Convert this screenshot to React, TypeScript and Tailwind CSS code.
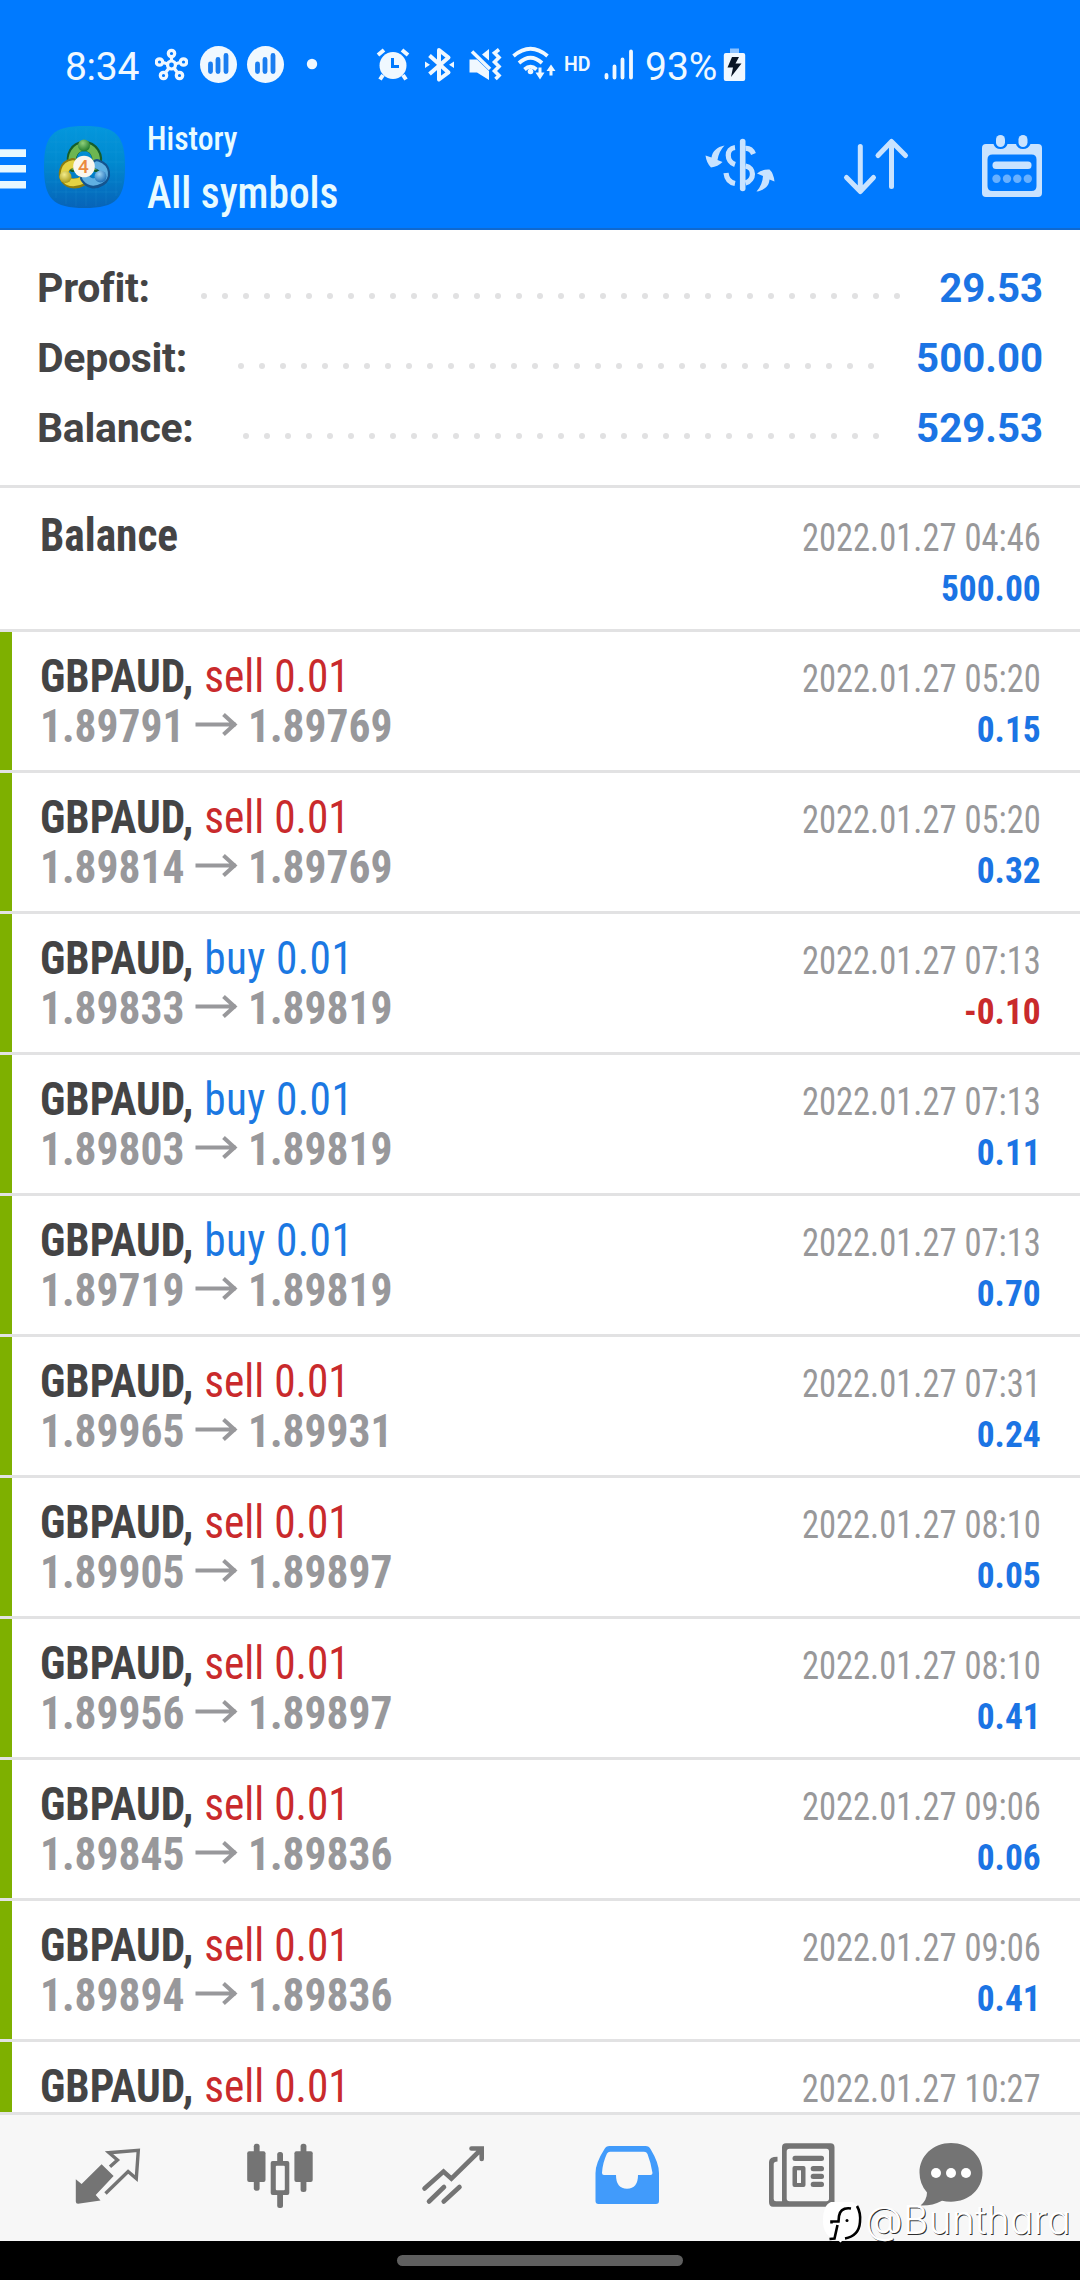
const trades = [
  { side: "sell", from: "1.89791", to: "1.89769", time: "2022.01.27 05:20", profit: "0.15" },
  { side: "sell", from: "1.89814", to: "1.89769", time: "2022.01.27 05:20", profit: "0.32" },
  { side: "buy", from: "1.89833", to: "1.89819", time: "2022.01.27 07:13", profit: "-0.10" },
  { side: "buy", from: "1.89803", to: "1.89819", time: "2022.01.27 07:13", profit: "0.11" },
  { side: "buy", from: "1.89719", to: "1.89819", time: "2022.01.27 07:13", profit: "0.70" },
  { side: "sell", from: "1.89965", to: "1.89931", time: "2022.01.27 07:31", profit: "0.24" },
  { side: "sell", from: "1.89905", to: "1.89897", time: "2022.01.27 08:10", profit: "0.05" },
  { side: "sell", from: "1.89956", to: "1.89897", time: "2022.01.27 08:10", profit: "0.41" },
  { side: "sell", from: "1.89845", to: "1.89836", time: "2022.01.27 09:06", profit: "0.06" },
  { side: "sell", from: "1.89894", to: "1.89836", time: "2022.01.27 09:06", profit: "0.41" },
];

const summary = [
  { label: "Profit:", value: "29.53", dots: 34, valueWidth: "w-[143px]" },
  { label: "Deposit:", value: "500.00", dots: 31, valueWidth: "w-[169px]" },
  { label: "Balance:", value: "529.53", dots: 31, valueWidth: "w-[164px]" },
];

function StatusBar() {
  return (
    <div className="flex h-[104px] items-start pl-[65px] text-[#f0f8ff]">
      <span className="mt-[42px] w-[90px] text-[39px] leading-[50px] tracking-[-0.3px]">8:34</span>
      <svg className="h-[104px] w-[33px]" viewBox="155 0 33 104" fill="none" stroke="currentColor" strokeWidth="3.2">
        <path d="M171.5 62V57M175 64L180 62.5M174 68L177 72M169 68L166 72M168 64L163 62.5" />
        <circle cx="171.5" cy="65" r="4" />
        <circle cx="171.5" cy="53.5" r="3.2" />
        <circle cx="183.5" cy="62" r="3.2" />
        <circle cx="179.5" cy="75.5" r="3.2" />
        <circle cx="163.5" cy="75.5" r="3.2" />
        <circle cx="159.5" cy="62" r="3.2" />
      </svg>
      <svg className="ml-[11px] h-[104px] w-[120px]" viewBox="199 0 120 104">
        <g fill="currentColor">
          <circle cx="218.5" cy="64.5" r="18.5" />
          <circle cx="265.5" cy="64.5" r="18.5" />
          <circle cx="312" cy="64" r="5.2" />
        </g>
        <path
          d="M210.5 64V71.5M218 59.5V71.5M226 55.5V71.5M257.5 64V71.5M265 59.5V71.5M273 55.5V71.5"
          stroke="#1a7df0"
          strokeWidth="4.8"
          strokeLinecap="round"
        />
      </svg>
      {/* alarm, bluetooth, mute, wifi */}
      <svg className="ml-[56px] h-[104px] w-[182px]" viewBox="375 0 182 104" fill="none" stroke="currentColor">
        <circle cx="393" cy="65.5" r="13.5" fill="currentColor" stroke="none" />
        <path d="M378 55L384 50M408 55L402 50M383 75L380 79.5M403 75L406 79.5" strokeWidth="4" />
        <path d="M392.5 58V66.5H399" stroke="#007aff" strokeWidth="3" />
        <path d="M429.5 55.5L448.5 72.5L439 79.5V50L448.5 57.5L429.5 74" strokeWidth="4" strokeLinejoin="round" />
        <path d="M425 61.5L430 64.8L425 68ZM454 61.5L449 64.8L454 68Z" fill="currentColor" stroke="none" />
        <path d="M469.5 59.5H477L489 71V80L477 72.5H469.5ZM482 54.5L489 49V60.5Z" fill="currentColor" stroke="none" />
        <path d="M472 51.5L490 69" strokeWidth="3.5" />
        <path d="M499 49.5L494.5 53L499 57.5L494.5 62L499 66.5L494.5 71L499 75.5L495.5 79" strokeWidth="3.6" />
        <path d="M513.5 56Q530.5 41.5 547.5 56M519 63Q530.5 52.5 542 63M524.5 69.5Q530.5 64 536.5 69.5" strokeWidth="3.8" />
        <circle cx="530.5" cy="71.5" r="2.8" fill="currentColor" stroke="none" />
        <path d="M540 67.5V76M551 75.5V67.5" strokeWidth="3" />
        <path d="M535.5 72.5H544.5L540 79.5ZM546.5 71H555.5L551 64.5Z" fill="currentColor" stroke="none" />
      </svg>
      <span className="ml-[7px] mt-[42px] w-[39px] text-[19.5px] font-semibold leading-[46px]">HD</span>
      <svg className="h-[104px] w-[32px]" viewBox="602 0 32 104" stroke="currentColor" strokeWidth="3.8" strokeLinecap="round">
        <path d="M605.5 75V77.5M613.5 66.5V77.5M621.5 59.5V77.5M630 51.5V77.5" />
      </svg>
      <span className="ml-[10px] mt-[42px] w-[78px] text-[39px] leading-[50px]">93%</span>
      <svg className="h-[104px] w-[24px]" viewBox="722 0 24 104">
        <rect x="729" y="48.5" width="9" height="6" fill="#8cc2ff" />
        <rect x="722.8" y="53" width="21.4" height="28" rx="2" fill="currentColor" />
        <path d="M731 57L726.5 67.5H732L730 77L740.5 63.5H734.5L738 57Z" fill="#0a1626" />
      </svg>
    </div>
  );
}

function AppLogo() {
  return (
    <svg className="ml-[18px] h-[124px] w-[82px]" viewBox="44 104 82 124">
      <defs>
        <linearGradient id="tile" x1="0" y1="0" x2="0" y2="1">
          <stop offset="0" stopColor="#0497dd" />
          <stop offset="0.45" stopColor="#0089cf" />
          <stop offset="1" stopColor="#0763b8" />
        </linearGradient>
        <radialGradient id="green" cx="0.4" cy="0.3" r="0.7">
          <stop offset="0" stopColor="#8fd07a" />
          <stop offset="1" stopColor="#1f7a2c" />
        </radialGradient>
        <radialGradient id="gold" cx="0.4" cy="0.3" r="0.7">
          <stop offset="0" stopColor="#f3ec8a" />
          <stop offset="1" stopColor="#a89a1c" />
        </radialGradient>
        <radialGradient id="sky" cx="0.4" cy="0.3" r="0.7">
          <stop offset="0" stopColor="#9ed4f5" />
          <stop offset="1" stopColor="#1e70b8" />
        </radialGradient>
      </defs>
      <path
        d="M84.5 126C116 126 125 135 125 167S116 208 84.5 208S44 199 44 167S53 126 84.5 126Z"
        fill="url(#tile)"
      />
      <path
        d="M56 135V198M66 130V204M76 128V206M86 128V206M96 128V206M106 130V204M116 138V196M50 142H120M46 152H123M45 162H124M45 172H124M46 182H122M52 192H118"
        stroke="#3db1ea"
        strokeOpacity="0.14"
        strokeWidth="1"
      />
      <g fill="none" strokeLinecap="round">
        <path d="M73 167C69 155 75 146 84 146S100 155 96 167" stroke="#155d2b" strokeWidth="10" />
        <path d="M73 166C70 155 76 147 84 147S99 155 95 166" stroke="#6db651" strokeWidth="7.5" />
        <path d="M73 163C63 165 62 175 66 180S78 184 83 181" stroke="#8a7c10" strokeWidth="10" />
        <path d="M73 164C64 165 63 175 66 179.5S77 183 83 180" stroke="#e3d344" strokeWidth="7.5" />
        <path d="M97 164C107 167 107 177 101 181S89 184 85 178" stroke="#14548f" strokeWidth="10" />
        <path d="M97 165C106 168 106 177 100 180S90 183 86 178" stroke="#5fb0e2" strokeWidth="7.5" />
      </g>
      <circle cx="84" cy="145.5" r="6" fill="url(#green)" />
      <circle cx="65.5" cy="177" r="6" fill="url(#gold)" />
      <circle cx="100.5" cy="176.5" r="6" fill="url(#sky)" />
      <circle cx="84" cy="166.5" r="10.8" fill="#faf6ee" />
      <text x="83.5" y="173.2" textAnchor="middle" fontSize="19" fontWeight="500" fill="#ea8a3e">
        4
      </text>
    </svg>
  );
}

function Header() {
  return (
    <header className="h-[230px] border-b-2 border-[#1069cf] bg-[#007aff]">
      <StatusBar />
      <div className="flex h-[124px] items-start">
        <svg className="h-[124px] w-[26px]" viewBox="0 104 26 124" fill="#e8f8ff">
          <path d="M0 149.3H26V157H0ZM0 165H26V172.5H0ZM0 181H26V188.5H0Z" />
        </svg>
        <AppLogo />
        <div className="ml-[21px] mt-[12px] w-[557px] origin-left scale-x-[0.93] font-['Roboto_Condensed',Roboto,sans-serif] font-medium text-[#e8fbff]">
          <div className="text-[34px] leading-[44px]">History</div>
          <div className="mt-[7px] text-[44.5px] leading-[52px]">All symbols</div>
        </div>
        <svg className="h-[124px] w-[76px]" viewBox="704 104 76 124" fill="none" stroke="#c9e3ff">
          <path d="M742.7 141.5V188.5" strokeWidth="5.6" strokeLinecap="round" />
          <path d="M735 147.5C726 148.5 726 161.5 735 164.5M745.5 148.5Q751 148 753.5 154" strokeWidth="5.2" />
          <path d="M745.5 166C754.5 167.5 755 180 745.5 183M726 173Q727 182 735 183.5" strokeWidth="5.2" />
          <g fill="#c9e3ff" stroke="none">
            <path d="M724.5 145.5C717 147 712.5 151 711.5 157.5L705.5 155.5Q706.5 163 711 167.5Q718 166.5 722.5 162L717.5 160Q719 151 724.5 145.5Z" />
            <path d="M756.5 191.5C765 190 769 186 769.5 179.5L774.5 181.5Q773.5 173 769.5 169.5Q762 169 757 173.5L763 176Q762.5 185 756.5 191.5Z" />
          </g>
        </svg>
        <svg
          className="ml-[62px] h-[124px] w-[70px]"
          viewBox="842 104 70 124"
          fill="none"
          stroke="#c9e3ff"
          strokeWidth="5"
          strokeLinecap="round"
          strokeLinejoin="round"
        >
          <path d="M860.3 146.5V191M846.5 177.5L860.3 191.5L873.5 177.5M891.5 186.5V142M878 155.5L891.5 141.5L905.5 155.5" />
        </svg>
        <svg className="ml-[68px] h-[124px] w-[64px]" viewBox="980 104 64 124">
          <path
            fillRule="evenodd"
            fill="#c9e3ff"
            d="M986 144H993.5Q995 149 1000.5 149T1007.5 144H1016Q1017.5 149 1023 149T1030.5 144H1038Q1042 144 1042 148V193Q1042 197 1038 197H986Q982 197 982 193V148Q982 144 986 144ZM992.5 154.5Q987.5 154.5 987.5 159.5V186Q987.5 191 992.5 191H1031.5Q1036.5 191 1036.5 186V159.5Q1036.5 154.5 1031.5 154.5Z"
          />
          <rect x="996" y="135" width="9" height="12" rx="4.5" fill="#c9e3ff" />
          <rect x="1018.5" y="135" width="9" height="12" rx="4.5" fill="#c9e3ff" />
          <rect x="992.5" y="161.5" width="39" height="7.5" rx="3.5" fill="#c9e3ff" />
          <g fill="#68b0ff">
            <circle cx="996.5" cy="178.7" r="4.2" />
            <circle cx="1007" cy="178.7" r="4.2" />
            <circle cx="1017.3" cy="178.7" r="4.2" />
            <circle cx="1027.8" cy="178.7" r="4.2" />
          </g>
        </svg>
      </div>
    </header>
  );
}

function Summary() {
  return (
    <section className="flex h-[258px] flex-col border-b-[3px] border-[#e2e2e3] px-[37px] pt-[23px]">
      {summary.map((row) => (
        <div key={row.label} className="flex h-[70px] items-center text-[41px] font-bold leading-[70px]">
          <span className="tracking-[-0.3px] text-[#444445]">{row.label}</span>
          <div className="mt-[16px] flex flex-1 justify-end gap-[15px]">
            {Array.from({ length: row.dots }, (_, i) => (
              <span key={i} className="h-[6px] w-[6px] shrink-0 rounded-full bg-[#e1e1e2]" />
            ))}
          </div>
          <span className={`${row.valueWidth} origin-right scale-x-[0.98] text-right text-[#1b74e4]`}>{row.value}</span>
        </div>
      ))}
    </section>
  );
}

function TradeTitle({ side }: { side: string }) {
  return (
    <div className="origin-left scale-x-[0.942]">
      <span className="font-bold text-[#444445]">GBPAUD,</span>{" "}
      <span className={side === "sell" ? "ml-[1px] text-[#c92a2c]" : "ml-[1px] tracking-[0.4px] text-[#1b78e2]"}>
        {side} 0.01
      </span>
    </div>
  );
}

function Trade({ trade }: { trade: (typeof trades)[number] }) {
  return (
    <div className="flex h-[141px] shrink-0 border-b-[3px] border-[#e2e2e3]">
      <div className="w-[12px] bg-[#7eb000]" />
      <div className="flex-1 pl-[28px] pt-[19px] text-[46px] leading-[50px]">
        <TradeTitle side={trade.side} />
        <div className="flex items-center font-bold text-[#98989b]">
          <span className="w-[155px] origin-left scale-x-[0.945]">{trade.from}</span>
          <svg className="h-[50px] w-[53px]" viewBox="0 0 53 50" fill="none" stroke="currentColor" strokeWidth="4">
            <path d="M0.5 23.5H41M28.5 13.5L39.5 23.5L28.5 33.5" />
          </svg>
          <span className="origin-left scale-x-[0.945]">{trade.to}</span>
        </div>
      </div>
      <div className="pr-[39px] pt-[22px] text-right leading-[50px]">
        <div className="origin-right scale-x-[0.909] text-[38px] text-[#98989a]">{trade.time}</div>
        <div
          className={`origin-right scale-x-[0.945] text-[37.5px] font-bold ${trade.profit.startsWith("-") ? "text-[#c92a2c]" : "text-[#1b74e4]"}`}
        >
          {trade.profit}
        </div>
      </div>
    </div>
  );
}

function History() {
  return (
    <section className="flex h-[1624px] shrink-0 flex-col font-['Roboto_Condensed',Roboto,sans-serif]">
      <div className="flex h-[144px] shrink-0 justify-between border-b-[3px] border-[#e2e2e3] pl-[40px] pr-[39px] leading-[50px]">
        <div className="origin-left scale-x-[0.942] pt-[22px] text-[46px] font-bold text-[#444445]">Balance</div>
        <div className="pt-[25px] text-right">
          <div className="origin-right scale-x-[0.909] text-[38px] text-[#98989a]">2022.01.27 04:46</div>
          <div className="origin-right scale-x-[0.945] text-[37.5px] font-bold text-[#1b74e4]">500.00</div>
        </div>
      </div>
      {trades.map((trade, i) => (
        <Trade key={i} trade={trade} />
      ))}
      {/* next trade, scrolled half under the toolbar */}
      <div className="flex h-[70px] shrink-0">
        <div className="w-[12px] bg-[#7eb000]" />
        <div className="flex-1 pl-[28px] pt-[19px] text-[46px] leading-[50px]">
          <TradeTitle side="sell" />
        </div>
        <div className="origin-right scale-x-[0.909] pr-[43px] pt-[24px] text-[38px] leading-[46px] text-[#98989a]">
          2022.01.27 10:27
        </div>
      </div>
    </section>
  );
}

function Toolbar() {
  return (
    <nav className="flex h-[129px] shrink-0 border-t-[3px] border-[#e2e2e3] bg-[#f7f7f7] pl-[72px] text-[#747474]">
      <svg className="h-[126px] w-[72px]" viewBox="72 2115 72 126">
        <path
          d="M75.8 2179.3L81.6 2184L101.6 2164.3L113.6 2176L95.7 2195L100.5 2200.5L78 2203.8Q75.8 2203.8 75.8 2201.5Z"
          fill="currentColor"
        />
        <path
          d="M110 2166.8L117.5 2160L109 2152.7L138.3 2150.3L136.3 2178.5L128.1 2171.5L105.5 2193.5"
          fill="none"
          stroke="currentColor"
          strokeWidth="3.4"
        />
      </svg>
      <svg className="ml-[102px] h-[126px] w-[70px]" viewBox="246 2115 70 126" fill="currentColor">
        <rect x="253.8" y="2143.7" width="5.8" height="47" rx="2.5" />
        <rect x="247.2" y="2151.3" width="18.3" height="30.7" rx="2" />
        <rect x="277.2" y="2152" width="5.8" height="56" rx="2.5" />
        <rect x="270.7" y="2161" width="18.6" height="34" rx="2" />
        <rect x="275.8" y="2165.7" width="9" height="24.6" rx="1" fill="#f7f7f7" />
        <rect x="300.6" y="2143.7" width="5.8" height="48.3" rx="2.5" />
        <rect x="294.4" y="2151.3" width="18.3" height="30.7" rx="2" />
      </svg>
      <svg
        className="ml-[104px] h-[126px] w-[70px]"
        viewBox="420 2115 70 126"
        fill="none"
        stroke="currentColor"
        strokeWidth="4.6"
        strokeLinecap="round"
      >
        <path d="M424.5 2188.5L443.5 2171.5L451.4 2178.7L480 2150.5M471.5 2148.5H481.7V2159M429 2201.5L444 2187M443.7 2201.5L459.5 2187" />
      </svg>
      <svg className="ml-[104px] h-[126px] w-[66px]" viewBox="594 2115 66 126">
        <path
          fillRule="evenodd"
          fill="#419bfb"
          d="M609.5 2146H645.5Q649 2146 650.5 2149Q659 2163 659 2173V2201Q659 2204 656 2204H598.5Q595.5 2204 595.5 2201V2173Q595.5 2163 604.5 2149Q606 2146 609.5 2146ZM610 2151.7Q608 2151.7 607 2153.5Q602.5 2163 602 2173Q602 2175 604 2175H616Q616 2188.7 627 2188.7T638 2175H650.5Q652.5 2175 652.5 2173Q651 2163 647.5 2154Q646.5 2151.7 644 2151.7Z"
        />
      </svg>
      <svg className="ml-[107px] h-[126px] w-[70px]" viewBox="767 2115 70 126">
        <path
          fillRule="evenodd"
          fill="currentColor"
          d="M786 2143.3H830.5Q834.5 2143.3 834.5 2147.3V2202.7Q834.5 2206.7 830.5 2206.7H773Q769 2206.7 769 2202V2162Q769 2156.7 777.5 2156.7V2161.5Q773.7 2161.5 773.7 2164V2199Q773.7 2201.3 776 2201.3H782V2147.3Q782 2143.3 786 2143.3ZM789.5 2148.7Q786.7 2148.7 786.7 2151.5V2198.5Q786.7 2201.3 789.5 2201.3H826.5Q829 2201.3 829 2198.5V2151.5Q829 2148.7 826.5 2148.7Z"
        />
        <g fill="currentColor">
          <rect x="792.5" y="2155.7" width="31.5" height="5.3" rx="2.5" />
          <rect x="792.5" y="2166" width="13" height="21" rx="2" />
          <rect x="810.7" y="2166" width="13.3" height="5.2" rx="2.5" />
          <rect x="810.7" y="2173.8" width="13.3" height="5.2" rx="2.5" />
          <rect x="810.7" y="2181.8" width="13.3" height="5.2" rx="2.5" />
        </g>
        <rect x="797" y="2170.3" width="4" height="12.7" fill="#f7f7f7" />
      </svg>
      <svg className="ml-[81px] h-[126px] w-[70px]" viewBox="918 2115 70 126">
        <path
          fill="currentColor"
          d="M951 2143C969 2143 982.5 2156 982.5 2172.5S969 2201.7 951 2201.7Q946 2201.7 942 2200.7Q932 2206 920.5 2205.5Q927 2200 927 2192.5Q919.5 2184 919.5 2172.5C919.5 2156 933 2143 951 2143Z"
        />
        <g fill="#fff">
          <circle cx="936" cy="2173" r="5" />
          <circle cx="951" cy="2173" r="5" />
          <circle cx="966" cy="2173" r="5" />
        </g>
      </svg>
    </nav>
  );
}

function Watermark() {
  return (
    <div className="absolute left-[820px] top-[2195px] flex items-start">
      <svg className="h-[52px] w-[46px]" viewBox="820 2195 46 52">
        <path
          d="M831 2202H852Q862 2205 862 2220T852 2238Q844 2238 840.5 2242.5L837 2239.5Q823 2237 823 2221T831 2202Z"
          fill="#fff"
        />
        <path
          d="M857 2206Q861 2213 860 2222Q859 2236 845 2238.5M851 2208.5Q840.5 2207 839 2216L838.5 2221.5H831.5V2223.5M837.5 2225L834.5 2238.5L829.5 2239"
          fill="none"
          stroke="#000"
          strokeWidth="2.6"
        />
        <circle cx="847" cy="2220.5" r="1.5" fill="#000" />
      </svg>
      <span className="-ml-[1px] font-['Inter',sans-serif] text-[39px] font-light leading-[50px] tracking-[0.2px] text-white [font-feature-settings:'cv11'] [text-shadow:1px_1px_0_#000000d0]">
        @Bunthara
      </span>
    </div>
  );
}

export default function App() {
  return (
    <div className="relative flex h-[2280px] w-[1080px] flex-col overflow-hidden bg-white font-['Roboto',sans-serif]">
      <Header />
      <Summary />
      <History />
      <Toolbar />
      <footer className="flex h-[39px] justify-center bg-black pt-[14px]">
        <div className="h-[11px] w-[286px] rounded-full bg-[#5f5f5f]" />
      </footer>
      <Watermark />
    </div>
  );
}
